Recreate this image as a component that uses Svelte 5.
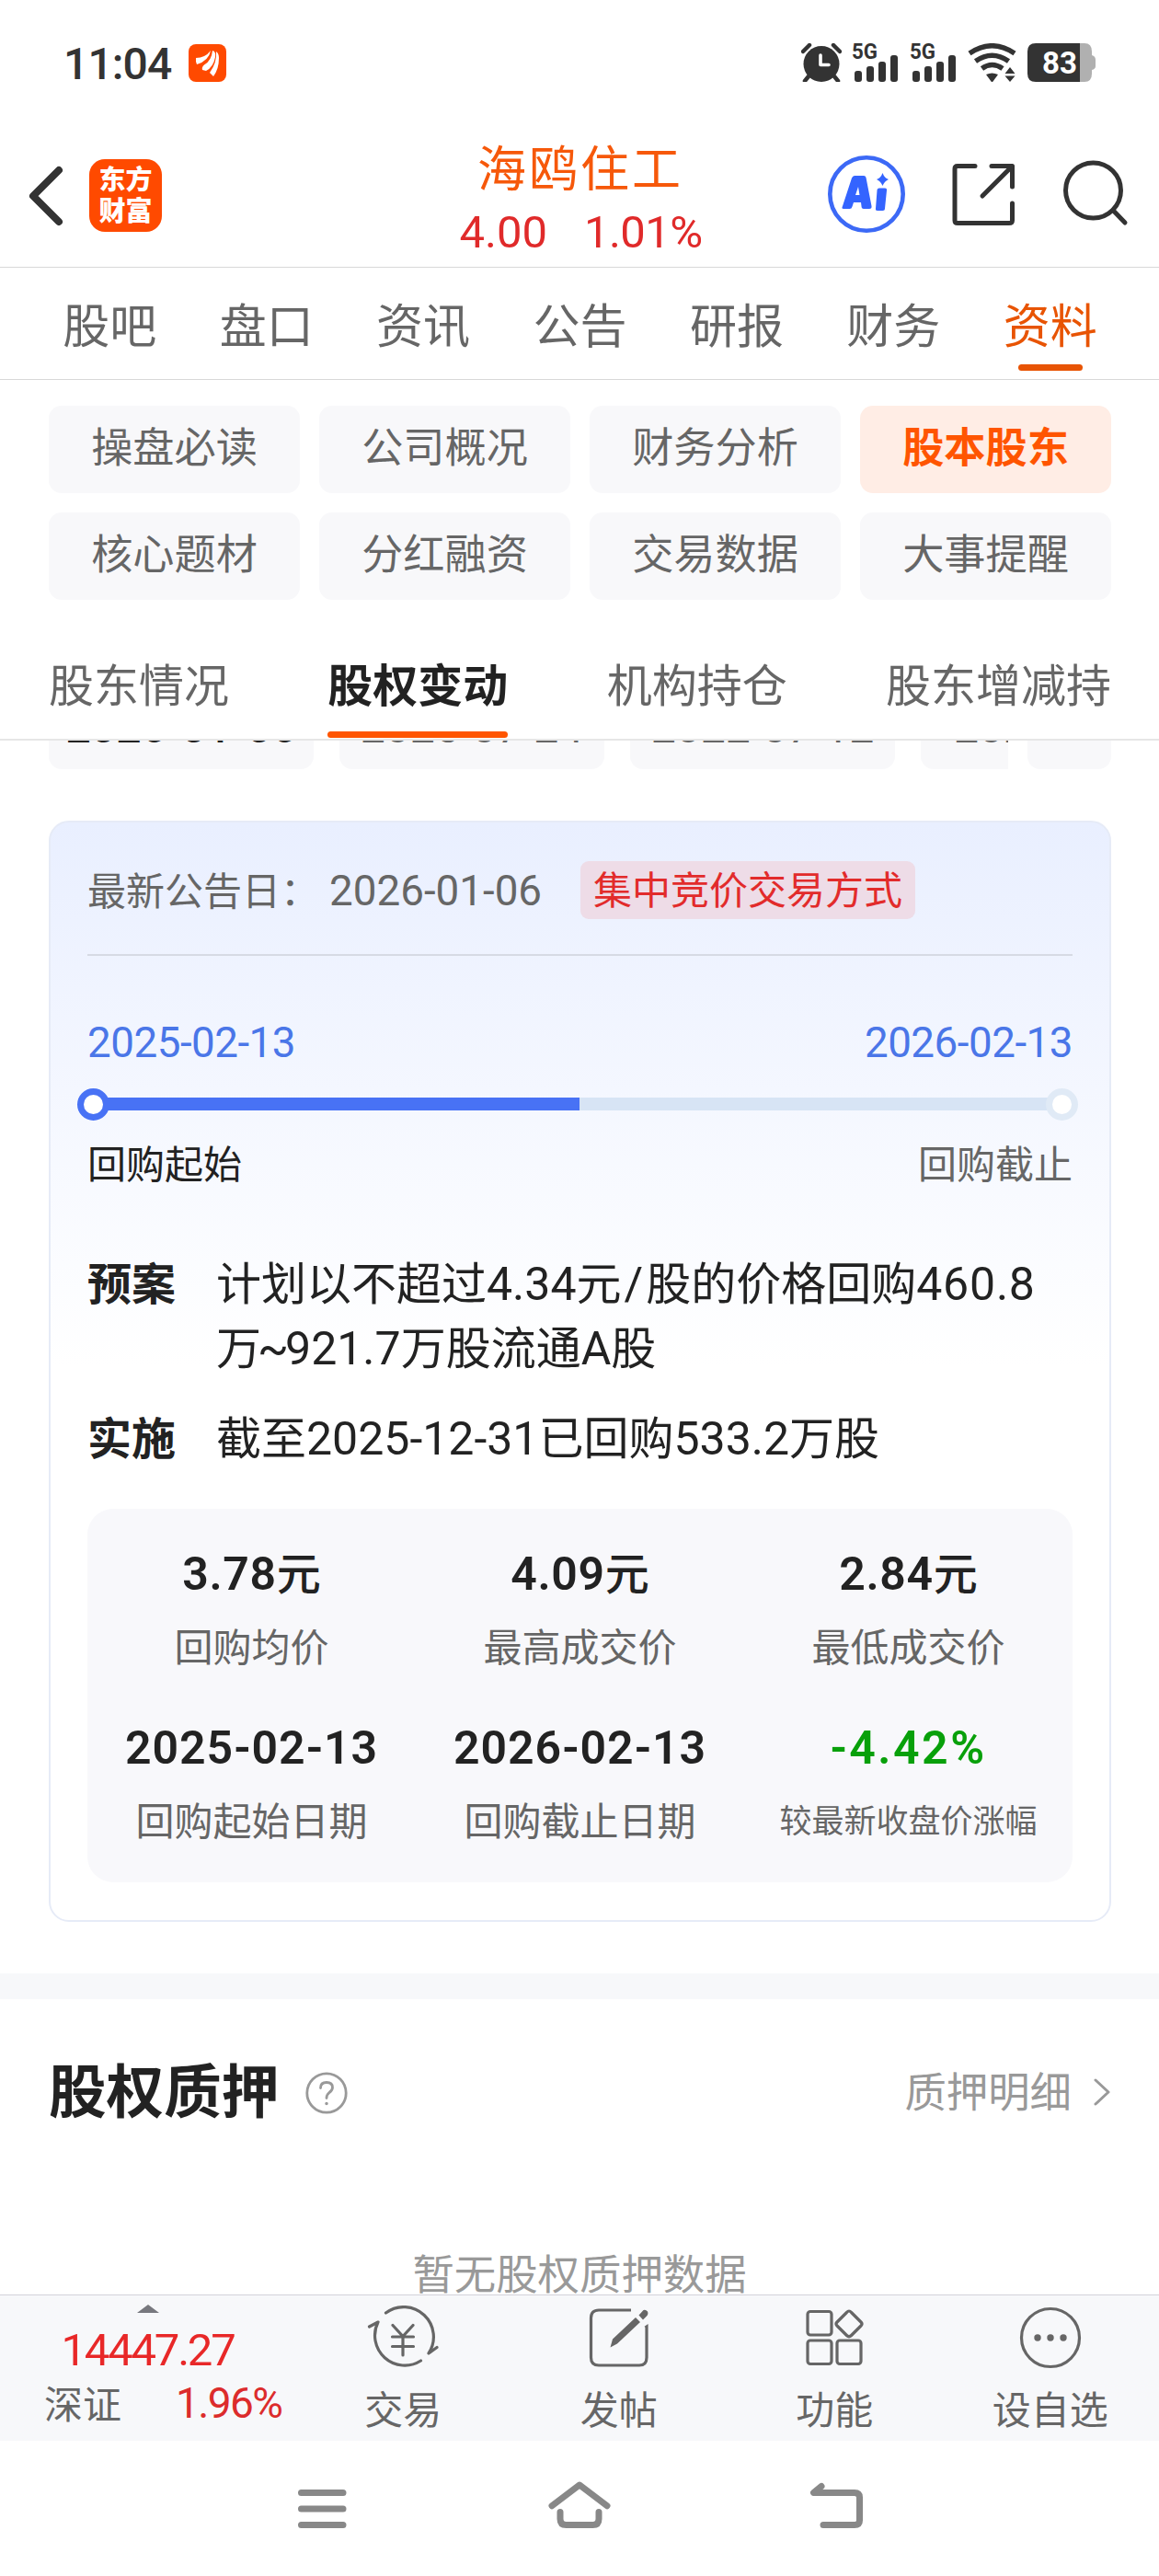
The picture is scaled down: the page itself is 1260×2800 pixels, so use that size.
<script>
  const tabs = ['股吧', '盘口', '资讯', '公告', '研报', '财务', '资料'];
  const sections = ['操盘必读', '公司概况', '财务分析', '股本股东', '核心题材', '分红融资', '交易数据', '大事提醒'];
  const subtabs = ['股东情况', '股权变动', '机构持仓', '股东增减持'];
  const dates = ['2026-01-06', '2025-07-24', '2022-07-12'];
  const stats = [
    { value: '3.78', unit: '元', label: '回购均价' },
    { value: '4.09', unit: '元', label: '最高成交价' },
    { value: '2.84', unit: '元', label: '最低成交价' },
    { value: '2025-02-13', unit: '', label: '回购起始日期' },
    { value: '2026-02-13', unit: '', label: '回购截止日期' },
    { value: '-4.42%', unit: '', label: '较最新收盘价涨幅', down: true, small: true }
  ];
  const progress = 50.2;
</script>

{#snippet signal()}
  <svg class="signal" width="51" height="42" viewBox="0 0 51 42">
    <text x="0" y="17" font-size="23" font-weight="700" textLength="28" lengthAdjust="spacingAndGlyphs">5G</text>
    <rect x="3" y="30" width="8" height="12" rx="3" />
    <rect x="16" y="25" width="8" height="17" rx="3" />
    <rect x="29" y="20" width="8" height="22" rx="3" />
    <rect x="42" y="13" width="8" height="29" rx="3" />
  </svg>
{/snippet}

<div class="screen">
  <div class="status">
    <span class="time">11:04</span>
    <svg class="app" width="41" height="41" viewBox="0 0 41 41">
      <rect width="41" height="41" rx="8" fill="#ff4a00" />
      <g fill="#fff">
        <path d="M8 15 Q18 15 24 7 Q22 18 9 22 Q7.500 19 8 15Z" />
        <path d="M15 28 Q14 25 17 22.500 Q25 18 26 7 Q30 8 29 14 Q27 25 19 29Z" />
        <path d="M23 31 Q31 20 30 8 Q33 10 33 15 Q33 27 27 35Z" />
      </g>
    </svg>
    <div class="status-right">
      <svg width="44" height="42" viewBox="0 0 44 42" fill="none" stroke="#333">
        <circle cx="22" cy="22.500" r="19.500" fill="#333" stroke="none" />
        <path d="M2 9 L9 2 M35 2 L42 9" stroke-width="4.500" stroke-linecap="round" />
        <path d="M8 36 L4 41 M36 36 L40 41" stroke-width="4.500" stroke-linecap="round" />
        <path d="M21 13 V23.500 H30" stroke="#fff" stroke-width="3.600" stroke-linecap="round" stroke-linejoin="round" />
      </svg>
      {@render signal()}
      {@render signal()}
      <svg class="wifi" width="54" height="42" viewBox="0 0 54 42">
        <g fill="none" stroke="#333" stroke-width="5.500">
          <path d="M2 11 Q26.500 -5.500 51 11" />
          <path d="M8.500 19.500 Q26.500 7 44.500 19.500" />
          <path d="M15.500 27.500 Q26.500 19.500 38 27.500" />
        </g>
        <path d="M20 34 Q26.500 31 33 34 L27.500 41.500 Q26.500 42.500 25.500 41.500Z" fill="#333" />
        <path d="M40.500 33 L46 26 L51.500 33Z M40.500 35.500 L46 42 L51.500 35.500Z" fill="#333" />
      </svg>
      <svg width="74" height="42" viewBox="0 0 74 42">
        <path d="M57 0 H62 Q70 0 70 9 V13 Q74 14 74 18 V25 Q74 28 70 29 V33 Q70 42 62 42 H57Z" fill="#b0b0b0" />
        <path d="M9 0 H57 V42 H9 Q0 42 0 33 V9 Q0 0 9 0Z" fill="#333" />
        <text x="16" y="33" font-size="34" font-weight="700" fill="#fff" textLength="38" lengthAdjust="spacingAndGlyphs">83</text>
      </svg>
    </div>
  </div>

  <header>
    <svg class="back" width="44" height="70" viewBox="0 0 44 70" fill="none" stroke="#333" stroke-width="8" stroke-linecap="round" stroke-linejoin="round">
      <path d="M36 7 L8 35 L36 63" />
    </svg>
    <div class="logo"><span>东方</span><span>财富</span></div>
    <div class="stock">
      <div class="name">海鸥住工</div>
      <div class="quote"><span>4.00</span><span class="change">1.01%</span></div>
    </div>
    <div class="actions">
      <svg width="84" height="84" viewBox="0 0 84 84">
        <circle cx="42" cy="42" r="39.700" fill="none" stroke="#3c69f6" stroke-width="4.600" />
        <g fill="#3464ff">
          <path fill-rule="evenodd" d="M29 22 H39 Q41 22 41.500 24 L47.500 55 Q48 58 45 58 H39 Q36.500 58 36.500 55 L36 51 H28 L26.500 55.500 Q26 58 23.500 58 H17 Q14.500 58 16 55 L26 24.500 Q27 22 29 22Z M33 34 L30 43 H34.500Z" />
          <path d="M56 35.500 H62 Q64.500 35.500 64 38 L62 57.500 Q62 60 59.500 60 H54 Q51.500 60 52 57.500 L53.500 38 Q53.500 35.500 56 35.500Z" />
          <path d="M59.500 19 Q61.500 24.500 66 26 Q61.500 28 59.500 33 Q57.500 28 53 26 Q57.500 24.500 59.500 19Z" />
        </g>
      </svg>
      <svg class="share" width="70" height="70" viewBox="0 0 70 70" fill="none" stroke="#333" stroke-width="5" stroke-linecap="round" stroke-linejoin="round">
        <path d="M26 3.500 H7 Q4 3.500 4 6.500 V62.500 Q4 65.500 7 65.500 H63 Q66.500 65.500 66.500 62.500 V44" />
        <path d="M44 3.500 H66.500 V26 M66 4 L34 36" />
      </svg>
      <svg class="search" width="74" height="74" viewBox="0 0 74 74" fill="none" stroke="#333" stroke-width="5" stroke-linecap="round">
        <circle cx="34.500" cy="34" r="30" />
        <path d="M56 55.500 L69 69" />
      </svg>
    </div>
  </header>

  <nav class="tabs">
    {#each tabs as tab, i}
      <div class="tab" class:active={i === 6}>{tab}</div>
    {/each}
  </nav>

  <div class="sections">
    {#each sections as s, i}
      <div class="chip" class:active={i === 3}>{s}</div>
    {/each}
  </div>

  <div class="subtabs">
    {#each subtabs as s, i}
      <div class="subtab" class:active={i === 1}>{s}</div>
    {/each}
  </div>

  <div class="dates">
    {#each dates as d, i}
      <div class="date" class:active={i === 0}>{d}</div>
    {/each}
    <div class="date cut">2021-07-12</div>
    <div class="date more"></div>
  </div>

  <section class="card">
    <div class="notice">
      <span class="notice-label">最新公告日：</span><span class="n">2026-01-06</span><span class="tag">集中竞价交易方式</span>
    </div>
    <div class="range">
      <span class="n">2025-02-13</span><span class="n">2026-02-13</span>
    </div>
    <div class="track">
      <i class="dot on"></i>
      <div class="rail"><div class="fill" style="width: {progress}%"></div></div>
      <i class="dot"></i>
    </div>
    <div class="ends"><span>回购起始</span><span>回购截止</span></div>

    <div class="plan">
      <b>预案</b>
      <p>计划以不超过<span class="n">4.34</span>元<span class="n slash">/</span>股的价格回购<span class="n wide">460.8</span><br />万<span class="n tilde">~</span><span class="n">921.7</span>万股流通<span class="n">A</span>股</p>
    </div>
    <div class="plan">
      <b>实施</b>
      <p>截至<span class="n">2025-12-31</span>已回购<span class="n">533.2</span>万股</p>
    </div>

    <div class="stats">
      {#each stats as s}
        <div class="stat">
          <div class="value" class:down={s.down} class:date-value={!s.unit}><span class="n">{s.value}</span>{s.unit}</div>
          <div class="label" class:small={s.small}>{s.label}</div>
        </div>
      {/each}
    </div>
  </section>

  <div class="band"></div>

  <section class="pledge">
    <div class="pledge-head">
      <h2>股权质押</h2>
      <svg class="help" width="46" height="46" viewBox="0 0 46 46" fill="none" stroke="#999" stroke-width="2.800" stroke-linecap="round">
        <circle cx="23" cy="23" r="21.200" />
        <path d="M16.500 17.500 Q16.500 11.500 23 11.500 Q29.500 11.500 29.500 17 Q29.500 20 26 22.500 Q23 25 23 28.500" />
        <circle cx="23" cy="34.500" r="1" fill="#999" stroke-width="1.500" />
      </svg>
      <span class="detail">质押明细</span>
      <svg class="go" width="20" height="32" viewBox="0 0 20 32" fill="none" stroke="#999" stroke-width="3" stroke-linecap="round" stroke-linejoin="round">
        <path d="M3 3 L17 16 L3 29" />
      </svg>
    </div>
    <div class="empty">暂无股权质押数据</div>
  </section>

  <footer>
    <div class="index">
      <i class="caret"></i>
      <div class="points">14447.27</div>
      <div class="index-row"><span>深证</span><span class="pct">1.96%</span></div>
    </div>
    <div class="item">
      <svg width="78" height="70" viewBox="0 0 78 70" fill="none" stroke="#666" stroke-width="3.200" stroke-linecap="round" stroke-linejoin="round">
        <path d="M20.500 8 A32.500 32.500 0 0 1 67 52 L76 45.500" />
        <path d="M58.500 60 A32.500 32.500 0 0 1 12 18 L2.500 23" />
        <path d="M28 21.500 L39 33.500 L50 21.500 M39 33.500 V54 M27.500 34 H50.500 M27.500 44.500 H50.500" />
      </svg>
      <span>交易</span>
    </div>
    <div class="item">
      <svg width="66" height="70" viewBox="0 0 66 70" fill="none" stroke="#666" stroke-width="3.200">
        <path d="M46 5 H11 Q2.500 5 2.500 13.500 V56.500 Q2.500 65 11 65 H55 Q63 65 63 56.500 V23 L61.500 24" />
        <path d="M23.500 45.500 L26 36.500 L51 13 L56 18 L31 41.500Z M54.500 10.500 L59.500 5 Q62 4 64 6.500 Q65 9 63.500 11 L59 15.500Z" fill="#666" stroke="none" />
      </svg>
      <span>发帖</span>
    </div>
    <div class="item">
      <svg width="64" height="70" viewBox="0 0 64 70" fill="none" stroke="#666" stroke-width="3.200" stroke-linejoin="round">
        <rect x="3" y="6.500" width="26" height="25.500" rx="3" />
        <rect x="3" y="38" width="26" height="25.500" rx="3" />
        <rect x="35" y="38" width="26" height="25.500" rx="3" />
        <path d="M45.500 7.500 Q48 4.500 50.500 7.500 L61 18 Q63 20 61 22 L50.500 32.500 Q48 35 45.500 32.500 L35 22 Q33 20 35 18Z" />
      </svg>
      <span>功能</span>
    </div>
    <div class="item">
      <svg width="68" height="70" viewBox="0 0 68 70" fill="none" stroke="#666" stroke-width="3.200">
        <circle cx="34" cy="35" r="31.500" />
        <g fill="#666" stroke="none"><circle cx="20" cy="35" r="3.700" /><circle cx="34" cy="35" r="3.700" /><circle cx="48" cy="35" r="3.700" /></g>
      </svg>
      <span>设自选</span>
    </div>
  </footer>

  <div class="sysnav">
    <svg width="68" height="60" viewBox="0 0 68 60" stroke="#888" stroke-width="7" stroke-linecap="round"><path d="M11.500 14.500 H57 M11.500 32 H57 M11.500 49.500 H57" /></svg>
    <svg width="68" height="60" viewBox="0 0 68 60" fill="none" stroke="#888" stroke-width="7" stroke-linecap="round" stroke-linejoin="round">
      <path d="M4 28.700 L34 6 L64 28.700" />
      <path d="M13 35.500 V43 Q13 49.500 19.500 49.500 H48.500 Q55 49.500 55 43 V35.500" />
    </svg>
    <svg width="68" height="60" viewBox="0 0 68 60" fill="none" stroke="#888" stroke-width="7" stroke-linecap="round" stroke-linejoin="round">
      <path d="M18 7.500 L9.500 14.500 H54 Q59.500 14.500 59.500 19.500 V44.500 Q59.500 49.500 54 49.500 H20" />
    </svg>
  </div>
</div>

<style>
  :global(body) { margin: 0; background: #fff; }
  .screen {
    width: 1260px; height: 2800px; overflow: hidden; background: #fff;
    display: flex; flex-direction: column;
    font-family: "Noto Sans CJK SC", sans-serif; color: #222;
  }
  .screen > * { box-sizing: border-box; flex: none; }
  svg { display: block; flex: none; }
  svg text { font-family: Roboto, sans-serif; }
  .n { font-family: Roboto, sans-serif; font-size: 1.09em; line-height: 1; }

  .status { height: 136px; padding: 0 69px 0 69px; display: flex; align-items: center; }
  .time { font: 500 48px/56px Roboto, sans-serif; color: #333; width: 136px; letter-spacing: -0.9px; padding-top: 3px; box-sizing: border-box; }
  .status-right { display: flex; margin-left: auto; gap: 11px; }
  .signal { fill: #333; }
  .signal + .signal { margin-left: 1px; }
  .wifi { margin-left: 1px; }

  header { height: 154px; padding-left: 28px; display: flex; align-items: center; position: relative; }
  .back { margin-top: -1px; }
  .logo { margin-left: 25px; width: 79px; height: 79px; border-radius: 17px; background: #ff4a00; color: #fff; display: flex; flex-direction: column; align-items: center; justify-content: center; font-weight: 900; font-size: 29px; line-height: 34px; box-sizing: border-box; padding-bottom: 4px; margin-top: -2px; }
  .stock { position: absolute; left: 0; right: 0; top: 0; text-align: center; }
  .name { margin-top: 9px; font-size: 53px; line-height: 70px; letter-spacing: 3px; text-indent: 2px; color: #f6580a; }
  .quote { font: 400 49px/56px Roboto, sans-serif; color: #e02a2a; display: flex; justify-content: center; gap: 40px; margin-top: 10px; padding-left: 3px; }
  .change { letter-spacing: -0.6px; }
  .actions { position: absolute; right: 32px; top: 33px; display: flex; align-items: center; }
  .share { margin-left: 50px; margin-top: 1px; }
  .search { margin-left: 50px; margin-top: -3px; }

  .tabs { height: 123px; border-top: 1px solid #d8d8d8; border-bottom: 1px solid #d8d8d8; padding: 0 33px 0 34px; display: flex; }
  .tab { flex: 1; text-align: center; font-size: 51px; line-height: 121px; color: #666; position: relative; }
  .tab.active { color: #e85404; }
  .tab.active::after { content: ""; position: absolute; left: 50%; margin-left: -35px; width: 70px; bottom: 9px; height: 7px; border-radius: 4px; background: #e85404; }

  .sections { padding: 28px 52px 0 53px; display: grid; grid-template-columns: repeat(4, 273px); gap: 21px; grid-auto-rows: 95px; }
  .chip { background: #f8f8fa; border-radius: 14px; text-align: center; font-size: 45.200px; line-height: 85px; color: #666; }
  .chip.active { background: #ffede5; color: #ff5500; font-weight: 700; }

  .subtabs { height: 153px; border-bottom: 2px solid #e6e6e6; padding: 55px 52px 0 53px; display: flex; justify-content: space-between; }
  .subtab { font-size: 49px; line-height: 70px; color: #666; position: relative; white-space: nowrap; }
  .subtab.active { color: #222; font-weight: 700; }
  .subtab.active::after { content: ""; position: absolute; left: 0; right: 0; bottom: 1px; height: 7px; border-radius: 4px; background: #ff5500; }

  .dates { height: 31px; overflow: hidden; padding: 0 52px 0 53px; display: flex; align-items: flex-end; }
  .date { flex: none; box-sizing: border-box; width: 288px; height: 95px; margin-right: 28px; border-radius: 14px; background: #f8f8fa; color: #666; font: 400 48px/99px Roboto, sans-serif; text-align: center; }
  .date.active { color: #222; font-weight: 500; }
  .date.cut { width: 95px; margin-right: 21px; border-radius: 14px 0 0 14px; overflow: hidden; text-align: left; padding-left: 36px; }
  .date.more { width: 91px; margin-right: 0; }

  .card { margin: 56px 52px 0 53px; height: 1197px; border: 2px solid #e6ebf7; border-radius: 22px; padding: 0 40px; background: linear-gradient(#e9efff 0, #f4f7ff 290px, #fff 590px); }
  .notice { height: 145px; box-sizing: border-box; border-bottom: 2px solid #d6dae4; display: flex; align-items: center; font-size: 42px; line-height: 62px; color: #666; padding-top: 4px; }
  .notice-label { margin-top: -4px; }
  .notice .n { margin: 2px 0 0 11px; }
  .tag { margin-left: 42px; height: 63px; line-height: 58px; padding: 0 14px; border-radius: 9px; background: #eedce7; color: #e22b2b; }
  .range { display: flex; justify-content: space-between; font-size: 42px; color: #4a76e8; margin-top: 72px; height: 45px; }
  .range .n { letter-spacing: -0.5px; }
  .track { display: flex; align-items: center; margin: 26px -6px 0 -11px; height: 36px; }
  .dot { box-sizing: border-box; width: 35px; height: 35px; border: 7px solid #e0eaf6; border-radius: 50%; background: #fff; flex: none; }
  .dot.on { border-color: #4872f5; }
  .rail { flex: 1; height: 14px; margin: 0 -2px; background: #d7e4f5; }
  .fill { height: 100%; background: #4872f5; }
  .ends { display: flex; justify-content: space-between; font-size: 42px; line-height: 60px; margin-top: 15px; height: 60px; }
  .ends span + span { color: #666; }
  .plan { display: flex; font-size: 49px; line-height: 70px; }
  .ends + .plan { margin-top: 64px; }
  .plan + .plan { margin-top: 28px; }
  .plan b { width: 140px; font-weight: 700; font-size: 48px; }
  .plan p { margin: 0; white-space: nowrap; }
  .plan .n { font-size: 50px; }
  .plan .slash { margin: 0 3px; }
  .plan .wide { letter-spacing: 0.8px; }
  .plan .tilde { margin: 0 -4px; }
  .stats { margin-top: 45px; height: 406px; box-sizing: border-box; padding-top: 31px; border-radius: 28px; background: #f8f8fb; display: grid; grid-template-columns: repeat(3, 1fr); grid-auto-rows: 189px; text-align: center; }
  .value { font-size: 48px; font-weight: 500; line-height: 72px; }
  .value .n { font-size: 50px; font-weight: 600; letter-spacing: 0.6px; }
  .date-value .n { letter-spacing: 1px; }
  .value.down { color: #08a00a; }
  .value.down .n { letter-spacing: 2.500px; }
  .label { font-size: 42px; line-height: 60px; margin-top: 15px; color: #666; }
  .label.small { font-size: 35px; }

  .band { margin-top: 56px; height: 28px; background: #f7f8fa; }
  .pledge { height: 321px; overflow: hidden; }
  .pledge-head { display: flex; align-items: center; padding: 54px 52px 0 53px; height: 90px; }
  h2 { margin: -6px 0 0; font-size: 62.600px; line-height: 90px; font-weight: 700; }
  .help { margin-left: 29px; margin-top: 5px; }
  .detail { margin: -2px 0 0 auto; font-size: 45.400px; line-height: 80px; color: #999; }
  .go { margin-left: 23px; margin-top: 4px; }
  .empty { text-align: center; font-size: 45.400px; line-height: 70px; color: #999; margin-top: 117px; }

  footer { height: 159px; border-top: 1px solid #d3d3da; background: #f7f8fa; display: flex; color: #666; font-size: 42px; }
  .index { width: 321px; display: flex; flex-direction: column; align-items: center; }
  .caret { margin-top: 10px; border: 12px solid transparent; border-top: 0; border-bottom: 9px solid #77787e; }
  .points { font: 400 49px/56px Roboto, sans-serif; letter-spacing: -2.200px; color: #e82828; margin-top: 13px; }
  .index-row { display: flex; align-items: center; line-height: 44px; align-self: stretch; padding-left: 48px; margin-top: 5px; }
  .pct { font: 400 46px/44px Roboto, sans-serif; letter-spacing: -1.600px; color: #dc2c2c; margin: 2px 0 0 59px; }
  .item { flex: 1; display: flex; flex-direction: column; align-items: center; }
  .item:last-child { padding-right: 1px; }
  .item svg { margin-top: 11px; }
  .item span { line-height: 50px; margin-top: 16px; }

  .sysnav { height: 147px; padding: 42px 317px 0 316px; display: flex; justify-content: space-between; }
</style>
